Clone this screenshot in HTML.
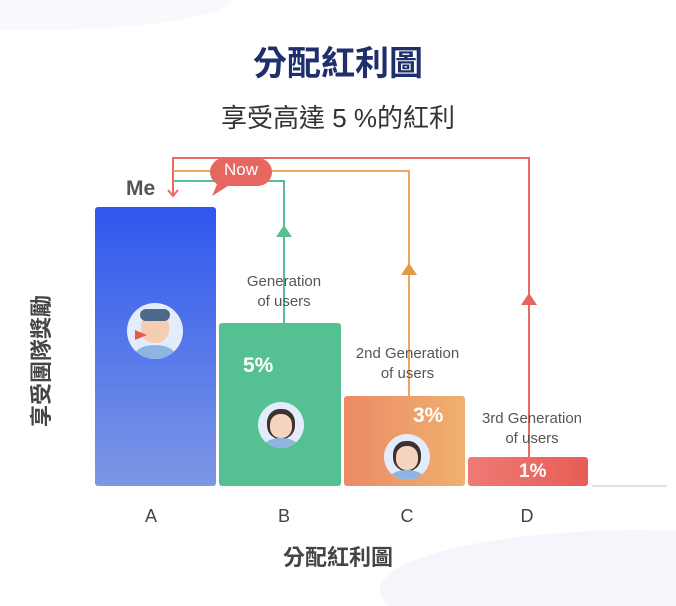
<!DOCTYPE html>
<html><head><meta charset="utf-8"><style>
html,body{margin:0;width:676px;height:606px;overflow:hidden}
body{background:#fff;font-family:"Liberation Sans","Noto Sans CJK TC",sans-serif;position:relative}
.a{position:absolute}
.t{color:#555;font-size:15px;text-align:center;line-height:20px}
.bar{position:absolute;border-radius:3px}
.pct{position:absolute;color:#fff;font-size:21px;font-weight:bold}
.av{position:absolute;width:46px;height:46px;border-radius:50%;background:#e3ecfa;overflow:hidden}
.lbl{position:absolute;top:506px;font-size:18px;color:#444;width:40px;text-align:center}
</style></head><body>
<svg class="a" style="left:0;top:0" width="676" height="606">
<ellipse cx="640" cy="590" rx="260" ry="60" fill="#f4f6fc"/>
<ellipse cx="30" cy="0" rx="200" ry="30" fill="#f8f9fc"/>
</svg>
<div class="a" style="left:0;width:676px;top:36px;text-align:center;font-size:34px;font-weight:bold;color:#1f2f6b">分配紅利圖</div>
<div class="a" style="left:0;width:676px;top:98px;text-align:center;font-size:26px;color:#333">享受高達 5 %的紅利</div>
<div class="bar" style="left:95px;top:207px;width:121px;height:279px;background:linear-gradient(#2f57ef,#7c97e6)"></div>
<div class="bar" style="left:219px;top:323px;width:122px;height:163px;background:#55c193"></div>
<div class="bar" style="left:344px;top:396px;width:121px;height:90px;background:linear-gradient(90deg,#ec8a66,#f0b06e)"></div>
<div class="bar" style="left:468px;top:457px;width:120px;height:29px;background:linear-gradient(90deg,#ee7a74,#e85d57)"></div>
<div class="a" style="left:592px;top:485px;width:75px;height:2px;background:#e2e2e2"></div>
<svg class="a" style="left:0;top:0" width="676" height="606" fill="none" stroke-width="2">
<path d="M173 195V158H529V457" stroke="#e86b63"/>
<path d="M173 171H409V396" stroke="#efa464"/>
<path d="M173 181H284V323" stroke="#55c193"/>
<path d="M168 190l5 6 5-6" stroke="#e86b63"/>
<path d="M276 237l8-12 8 12z" fill="#55c193" stroke="none"/>
<path d="M401 275l8-12 8 12z" fill="#e09a4a" stroke="none"/>
<path d="M521 305l8-12 8 12z" fill="#e5675f" stroke="none"/>
<rect x="210" y="158" width="62" height="28" rx="14" fill="#e5675f" stroke="none"/>
<path d="M218 182l-6 14 16-10z" fill="#e5675f" stroke="none"/>
</svg>
<div class="a" style="left:210px;top:160px;width:62px;text-align:center;color:#fff;font-size:17px">Now</div>
<div class="a" style="left:126px;top:177px;font-size:21px;font-weight:bold;color:#555">Me</div>
<div class="a t" style="left:224px;top:272px;width:120px">Generation<br>of users</div>
<div class="a t" style="left:345px;top:344px;width:125px">2nd Generation<br>of users</div>
<div class="a t" style="left:472px;top:409px;width:120px">3rd Generation<br>of users</div>
<div class="pct" style="left:243px;top:354px">5%</div>
<div class="pct" style="left:413px;top:404px">3%</div>
<div class="pct" style="left:519px;top:461px;font-size:19px">1%</div>
<div class="av" style="left:127px;top:303px;width:56px;height:56px"><div class="a" style="left:14px;top:10px;width:28px;height:30px;border-radius:45%;background:#f6cdb0"></div><div class="a" style="left:13px;top:6px;width:30px;height:12px;border-radius:8px;background:#4d6a8c"></div><div class="a" style="left:8px;top:42px;width:40px;height:20px;border-radius:50%;background:#8fb4e0"></div></div>
<div class="a" style="left:135px;top:330px;width:0;height:0;border-left:12px solid #e55c45;border-top:5px solid transparent;border-bottom:5px solid transparent"></div>
<div class="av" style="left:258px;top:402px"><div class="a" style="left:9px;top:7px;width:28px;height:30px;border-radius:45%;background:#3d3030"></div><div class="a" style="left:12px;top:12px;width:22px;height:24px;border-radius:45%;background:#f6d5bf"></div><div class="a" style="left:6px;top:36px;width:34px;height:16px;border-radius:50%;background:#8fb4e0"></div></div>
<div class="av" style="left:384px;top:434px"><div class="a" style="left:9px;top:7px;width:28px;height:30px;border-radius:45%;background:#3d3030"></div><div class="a" style="left:12px;top:12px;width:22px;height:24px;border-radius:45%;background:#f6d5bf"></div><div class="a" style="left:6px;top:36px;width:34px;height:16px;border-radius:50%;background:#8fb4e0"></div></div>
<div class="lbl" style="left:131px">A</div>
<div class="lbl" style="left:264px">B</div>
<div class="lbl" style="left:387px">C</div>
<div class="lbl" style="left:507px">D</div>
<div class="a" style="left:0;width:676px;top:540px;text-align:center;font-size:22px;font-weight:bold;color:#444">分配紅利圖</div>
<div class="a" style="left:-40px;top:345px;width:160px;text-align:center;transform:rotate(-90deg);font-size:22px;font-weight:bold;color:#444">享受團隊獎勵</div>
</body></html>
